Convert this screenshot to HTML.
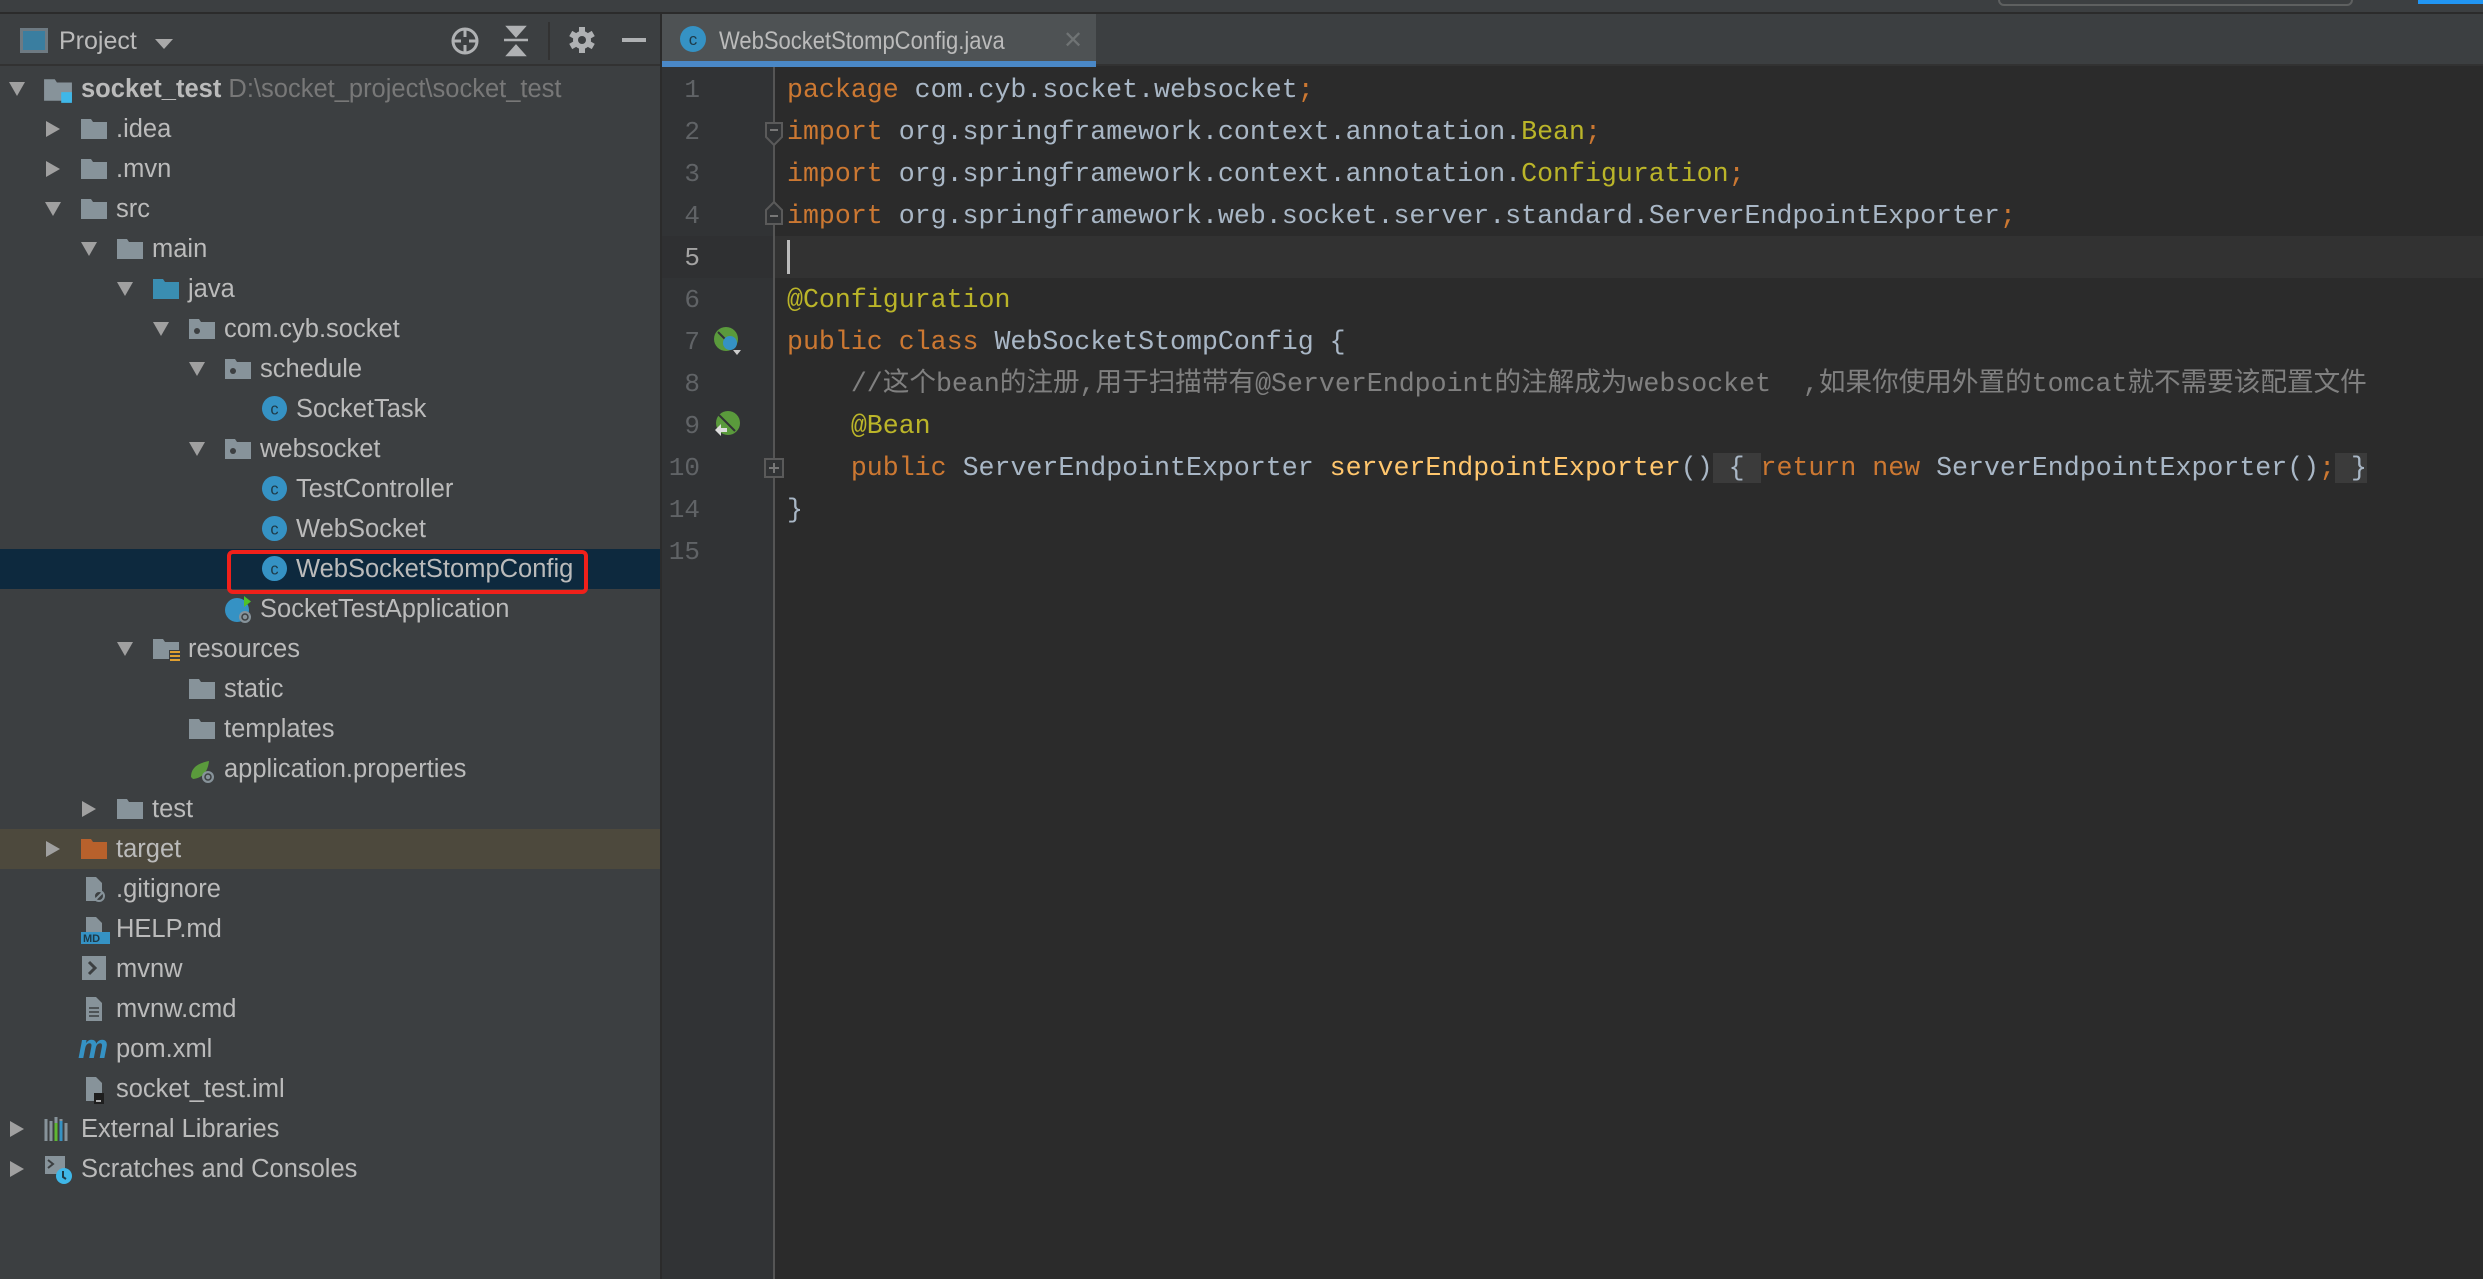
<!DOCTYPE html>
<html><head><meta charset="utf-8">
<style>
*{margin:0;padding:0;box-sizing:border-box}
html,body{width:2483px;height:1279px;overflow:hidden;background:#2b2b2b}
body{position:relative;font-family:"Liberation Sans","Noto Sans CJK SC",sans-serif}
.abs{position:absolute}
#top{left:0;top:0;width:2483px;height:12px;background:#3c3f41}
#topline{left:0;top:12px;width:2483px;height:2px;background:#2b2b2b}
#side{left:0;top:14px;width:660px;height:1265px;background:#3c3f41}
#sidehdr{left:0;top:14px;width:660px;height:52px;background:#3c3f41;border-bottom:2px solid #323232}
#sep{left:660px;top:14px;width:2px;height:1265px;background:#2b2b2b}
#tabbar{left:662px;top:14px;width:1821px;height:52px;background:#3c3f41;border-bottom:2px solid #323232}
#tab{left:662px;top:14px;width:434px;height:52px;background:#4e5254}
#tabline{left:662px;top:61px;width:434px;height:6px;background:#4a88c7}
#gutter{left:662px;top:67px;width:112px;height:1212px;background:#313335}
#gline{left:773px;top:67px;width:2px;height:1212px;background:#555555}
.r{position:absolute;left:0;width:660px;height:40px}
.t{position:absolute;top:0;line-height:40px;font-size:25.5px;color:#bbbbbb;white-space:nowrap}
.ic{position:absolute;top:6px}
.tri{position:absolute;top:12px}
.code{position:absolute;left:787px;font-family:"Liberation Mono","Noto Sans CJK SC",monospace;font-size:26.6px;line-height:42px;height:42px;color:#a9b7c6;white-space:pre}
.ln{position:absolute;right:1783px;font-family:"Liberation Mono",monospace;font-size:26px;line-height:42px;color:#606366;text-align:right}
.k{color:#cc7832}.a{color:#bbb529}.c{color:#808080}.m{color:#ffc66d}
.box{background:#3b3b3b}
</style></head><body>
<div id="top" class="abs"></div>
<div class="abs" style="left:1998px;top:-6px;width:355px;height:12px;border:2px solid #5e6060;border-radius:6px"></div>
<div class="abs" style="left:2418px;top:0;width:65px;height:4px;background:#2196f3"></div>
<div id="topline" class="abs"></div>
<div id="side" class="abs"></div>
<div id="sidehdr" class="abs"></div>
<!-- header -->
<div class="abs" style="left:20px;top:28px;width:28px;height:25px;border:3px solid #6e7a82;background:#3a7ea0"></div>
<div class="abs" style="left:59px;top:22px;font-size:25px;line-height:38px;color:#bbbbbb">Project</div>
<div class="abs" style="left:155px;top:39px;width:0;height:0;border-left:9px solid transparent;border-right:9px solid transparent;border-top:10px solid #a9a9a9"></div>
<svg class="abs" style="left:448px;top:24px" width="34" height="34" viewBox="0 0 34 34"><circle cx="17" cy="17" r="12" fill="none" stroke="#afb1b3" stroke-width="3"/><path d="M17 5v8M17 21v8M5 17h8M21 17h8" stroke="#afb1b3" stroke-width="3"/></svg>
<svg class="abs" style="left:502px;top:25px" width="28" height="32" viewBox="0 0 28 32"><path d="M6 2h16l-8 9zM2 15h24M6 30h16l-8-9z" fill="#afb1b3" stroke="#afb1b3" stroke-width="2.5"/></svg>
<div class="abs" style="left:548px;top:22px;width:2px;height:38px;background:#323232"></div>
<svg class="abs" style="left:568px;top:26px" width="28" height="28" viewBox="0 0 28 28"><g fill="#afb1b3"><circle cx="14" cy="14" r="9"/><rect x="11" y="1" width="6" height="26"/><rect x="11" y="1" width="6" height="26" transform="rotate(60 14 14)"/><rect x="11" y="1" width="6" height="26" transform="rotate(-60 14 14)"/></g><circle cx="14" cy="14" r="4" fill="#3c3f41"/></svg>
<div class="abs" style="left:622px;top:38px;width:24px;height:4px;background:#afb1b3"></div>
<div id="sep" class="abs"></div>
<div id="tabbar" class="abs"></div>
<div id="tab" class="abs"></div>
<div id="tabline" class="abs"></div>
<svg class="abs" style="left:679px;top:25px" width="28" height="28" viewBox="0 0 28 28"><circle cx="14" cy="14" r="13" fill="#3592c4"/><text x="14" y="20" font-size="17" font-family="Liberation Sans" fill="#1e3a48" text-anchor="middle">c</text></svg>
<div class="abs" style="left:719px;top:22px;font-size:22px;line-height:38px;color:#bbbbbb;transform:scaleY(1.12);transform-origin:left center">WebSocketStompConfig.java</div>
<div class="abs" style="left:1063px;top:22px;font-size:24px;line-height:38px;color:#6f7374">✕</div>

<!-- tree rows -->
<div class="r" style="top:549px;background:#0d293e"></div>
<div class="r" style="top:829px;background:#4d493d"></div>
<div class="abs" style="left:227px;top:550px;width:361px;height:44px;border:4px solid #f0201a;border-radius:6px"></div>

<svg width="0" height="0" style="position:absolute">
<defs>
<symbol id="fold" viewBox="0 0 28 28"><path d="M1 4h10l2 3h14v17H1z" fill="#87939a"/></symbol>
<symbol id="pkg" viewBox="0 0 28 28"><path d="M1 4h10l2 3h14v17H1z" fill="#87939a"/><circle cx="9" cy="16" r="3" fill="#3c3f41"/></symbol>
<symbol id="cls" viewBox="0 0 28 28"><circle cx="14" cy="14" r="13" fill="#3592c4"/><text x="14" y="20" font-size="17" font-family="Liberation Sans" fill="#1e3a48" text-anchor="middle">c</text></symbol>
<symbol id="tr" viewBox="0 0 16 16"><path d="M0 1h16L8 15z" fill="#a0a0a0"/></symbol>
<symbol id="tc" viewBox="0 0 16 16"><path d="M1 0v16l14-8z" fill="#a0a0a0"/></symbol>
</defs></svg>

<div class="r" style="top:69px"><svg class="tri" style="left:9px" width="16" height="16"><use href="#tr"/></svg><svg class="ic" style="left:43px" width="30" height="30" viewBox="0 0 28 28"><path d="M1 4h10l2 3h14v17H1z" fill="#87939a"/><rect x="17" y="16" width="10" height="10" fill="#3fb7e8"/></svg><div class="t" style="left:81px;font-weight:bold">socket_test <span style="font-weight:normal;color:#787878">D:\socket_project\socket_test</span></div></div>
<div class="r" style="top:109px"><svg class="tri" style="left:45px" width="16" height="16"><use href="#tc"/></svg><svg class="ic" style="left:80px" width="28" height="28"><use href="#fold"/></svg><div class="t" style="left:116px">.idea</div></div>
<div class="r" style="top:149px"><svg class="tri" style="left:45px" width="16" height="16"><use href="#tc"/></svg><svg class="ic" style="left:80px" width="28" height="28"><use href="#fold"/></svg><div class="t" style="left:116px">.mvn</div></div>
<div class="r" style="top:189px"><svg class="tri" style="left:45px" width="16" height="16"><use href="#tr"/></svg><svg class="ic" style="left:80px" width="28" height="28"><use href="#fold"/></svg><div class="t" style="left:116px">src</div></div>
<div class="r" style="top:229px"><svg class="tri" style="left:81px" width="16" height="16"><use href="#tr"/></svg><svg class="ic" style="left:116px" width="28" height="28"><use href="#fold"/></svg><div class="t" style="left:152px">main</div></div>
<div class="r" style="top:269px"><svg class="tri" style="left:117px" width="16" height="16"><use href="#tr"/></svg><svg class="ic" style="left:152px" width="28" height="28" viewBox="0 0 28 28"><path d="M1 4h10l2 3h14v17H1z" fill="#3a8eb2"/></svg><div class="t" style="left:188px">java</div></div>
<div class="r" style="top:309px"><svg class="tri" style="left:153px" width="16" height="16"><use href="#tr"/></svg><svg class="ic" style="left:188px" width="28" height="28"><use href="#pkg"/></svg><div class="t" style="left:224px">com.cyb.socket</div></div>
<div class="r" style="top:349px"><svg class="tri" style="left:189px" width="16" height="16"><use href="#tr"/></svg><svg class="ic" style="left:224px" width="28" height="28"><use href="#pkg"/></svg><div class="t" style="left:260px">schedule</div></div>
<div class="r" style="top:389px"><svg class="ic" style="left:261px" width="27" height="27"><use href="#cls"/></svg><div class="t" style="left:296px">SocketTask</div></div>
<div class="r" style="top:429px"><svg class="tri" style="left:189px" width="16" height="16"><use href="#tr"/></svg><svg class="ic" style="left:224px" width="28" height="28"><use href="#pkg"/></svg><div class="t" style="left:260px">websocket</div></div>
<div class="r" style="top:469px"><svg class="ic" style="left:261px" width="27" height="27"><use href="#cls"/></svg><div class="t" style="left:296px">TestController</div></div>
<div class="r" style="top:509px"><svg class="ic" style="left:261px" width="27" height="27"><use href="#cls"/></svg><div class="t" style="left:296px">WebSocket</div></div>
<div class="r" style="top:549px"><svg class="ic" style="left:261px" width="27" height="27"><use href="#cls"/></svg><div class="t" style="left:296px">WebSocketStompConfig</div></div>
<div class="r" style="top:589px"><svg class="ic" style="left:224px" width="30" height="30" viewBox="0 0 30 30"><circle cx="13" cy="15" r="12" fill="#3592c4"/><path d="M20 1v11l7-5.5z" fill="#4fc228"/><circle cx="21" cy="22" r="6" fill="#87939a"/><circle cx="21" cy="22" r="3" fill="none" stroke="#3c3f41" stroke-width="1.5"/></svg><div class="t" style="left:260px">SocketTestApplication</div></div>
<div class="r" style="top:629px"><svg class="tri" style="left:117px" width="16" height="16"><use href="#tr"/></svg><svg class="ic" style="left:152px" width="30" height="30" viewBox="0 0 30 30"><path d="M1 4h10l2 3h14v17H1z" fill="#87939a"/><rect x="17" y="15" width="11" height="13" fill="#3c3f41"/><path d="M18 17h10M18 21h10M18 25h10" stroke="#e0a030" stroke-width="2"/></svg><div class="t" style="left:188px">resources</div></div>
<div class="r" style="top:669px"><svg class="ic" style="left:188px" width="28" height="28"><use href="#fold"/></svg><div class="t" style="left:224px">static</div></div>
<div class="r" style="top:709px"><svg class="ic" style="left:188px" width="28" height="28"><use href="#fold"/></svg><div class="t" style="left:224px">templates</div></div>
<div class="r" style="top:749px"><svg class="ic" style="left:188px" width="30" height="30" viewBox="0 0 30 30"><path d="M3 22c0-10 8-14 18-16c-1 10-6 17-16 18z" fill="#5a9a3c"/><circle cx="20" cy="22" r="6" fill="#87939a"/><circle cx="20" cy="22" r="3" fill="none" stroke="#3c3f41" stroke-width="1.5"/></svg><div class="t" style="left:224px">application.properties</div></div>
<div class="r" style="top:789px"><svg class="tri" style="left:81px" width="16" height="16"><use href="#tc"/></svg><svg class="ic" style="left:116px" width="28" height="28"><use href="#fold"/></svg><div class="t" style="left:152px">test</div></div>
<div class="r" style="top:829px"><svg class="tri" style="left:45px" width="16" height="16"><use href="#tc"/></svg><svg class="ic" style="left:80px" width="28" height="28" viewBox="0 0 28 28"><path d="M1 4h10l2 3h14v17H1z" fill="#b8612c"/></svg><div class="t" style="left:116px">target</div></div>
<div class="r" style="top:869px"><svg class="ic" style="left:80px" width="28" height="28" viewBox="0 0 28 28"><path d="M6 2h10l6 6v18H6z" fill="#87939a"/><circle cx="19" cy="21" r="5" fill="#3c3f41" stroke="#87939a" stroke-width="2"/><path d="M16 24l6-6" stroke="#87939a" stroke-width="2"/></svg><div class="t" style="left:116px">.gitignore</div></div>
<div class="r" style="top:909px"><svg class="ic" style="left:80px" width="30" height="30" viewBox="0 0 30 30"><path d="M6 2h10l6 6v10H6z" fill="#87939a"/><rect x="1" y="17" width="29" height="12" fill="#3592c4"/><text x="3" y="27" font-size="11" font-weight="bold" font-family="Liberation Sans" fill="#1e3a48">MD</text></svg><div class="t" style="left:116px">HELP.md</div></div>
<div class="r" style="top:949px"><svg class="ic" style="left:81px" width="26" height="26" viewBox="0 0 26 26"><rect x="1" y="1" width="24" height="24" fill="#87939a"/><path d="M8 7l6 6-6 6" stroke="#3c3f41" stroke-width="3" fill="none"/></svg><div class="t" style="left:116px">mvnw</div></div>
<div class="r" style="top:989px"><svg class="ic" style="left:80px" width="28" height="28" viewBox="0 0 28 28"><path d="M6 2h10l6 6v18H6z" fill="#87939a"/><path d="M9 13h10M9 17h10M9 21h10" stroke="#3c3f41" stroke-width="1.5"/></svg><div class="t" style="left:116px">mvnw.cmd</div></div>
<div class="r" style="top:1029px"><div class="t" style="left:78px;font-size:34px;font-style:italic;font-weight:bold;color:#3592c4;line-height:36px">m</div><div class="t" style="left:116px">pom.xml</div></div>
<div class="r" style="top:1069px"><svg class="ic" style="left:80px" width="28" height="30" viewBox="0 0 28 30"><path d="M6 2h10l6 6v18H6z" fill="#87939a"/><rect x="14" y="18" width="10" height="11" fill="#1e1e1e"/><path d="M16 26h5" stroke="#ddd" stroke-width="1.5"/></svg><div class="t" style="left:116px">socket_test.iml</div></div>
<div class="r" style="top:1109px"><svg class="tri" style="left:9px" width="16" height="16"><use href="#tc"/></svg><svg class="ic" style="left:44px" width="28" height="28" viewBox="0 0 28 28"><path d="M2 4v22M7 6v20M12 2v24M17 4v22M22 8v18" stroke="#87939a" stroke-width="3"/><path d="M12 8v18" stroke="#5fb832" stroke-width="3"/><path d="M17 6v20" stroke="#3592c4" stroke-width="3"/></svg><div class="t" style="left:81px">External Libraries</div></div>
<div class="r" style="top:1149px"><svg class="tri" style="left:9px" width="16" height="16"><use href="#tc"/></svg><svg class="ic" style="left:44px" width="30" height="30" viewBox="0 0 30 30"><rect x="1" y="1" width="20" height="18" fill="#87939a"/><path d="M4 5l5 4-5 4" stroke="#3c3f41" stroke-width="2" fill="none"/><circle cx="20" cy="21" r="8" fill="#3fb7e8"/><path d="M19 16v6l3 2" stroke="#1e3a48" stroke-width="2" fill="none"/></svg><div class="t" style="left:81px">Scratches and Consoles</div></div>

<!-- editor -->
<div id="gutter" class="abs"></div>
<div class="abs" style="left:662px;top:236px;width:112px;height:42px;background:#2f3032"></div>
<div class="abs" style="left:775px;top:236px;width:1708px;height:42px;background:#323232"></div>
<div id="gline" class="abs"></div>
<svg class="abs" style="left:764px;top:122px" width="20" height="24" viewBox="0 0 20 24"><path d="M2 1h16v14l-8 8-8-8z" fill="#313335" stroke="#5a5a5a" stroke-width="2"/><path d="M6 8h8" stroke="#777" stroke-width="2"/></svg>
<svg class="abs" style="left:764px;top:201px" width="20" height="24" viewBox="0 0 20 24"><path d="M2 23h16V9l-8-8-8 8z" fill="#313335" stroke="#5a5a5a" stroke-width="2"/><path d="M6 15h8" stroke="#777" stroke-width="2"/></svg>
<svg class="abs" style="left:764px;top:458px" width="20" height="20" viewBox="0 0 20 20"><rect x="1" y="1" width="18" height="18" fill="#313335" stroke="#5a5a5a" stroke-width="2"/><path d="M5 10h10M10 5v10" stroke="#777" stroke-width="2"/></svg>
<svg class="abs" style="left:713px;top:326px" width="30" height="30" viewBox="0 0 30 30"><circle cx="13" cy="13" r="12" fill="#5a9a3c"/><path d="M5 6l16 16" stroke="#313335" stroke-width="2"/><circle cx="17" cy="17" r="7" fill="#3592c4"/><path d="M20 24h8l-4 5z" fill="#ccc"/></svg>
<svg class="abs" style="left:713px;top:410px" width="30" height="30" viewBox="0 0 30 30"><circle cx="15" cy="13" r="12" fill="#5a9a3c"/><path d="M6 5l16 16" stroke="#313335" stroke-width="2"/><path d="M2 20l6-6v4h6v4H8v4z" fill="#ddd"/></svg>

<div class="ln" style="top:69px">1</div>
<div class="ln" style="top:111px">2</div>
<div class="ln" style="top:153px">3</div>
<div class="ln" style="top:195px">4</div>
<div class="ln" style="top:237px;color:#a4a3a3">5</div>
<div class="ln" style="top:279px">6</div>
<div class="ln" style="top:321px">7</div>
<div class="ln" style="top:363px">8</div>
<div class="ln" style="top:405px">9</div>
<div class="ln" style="top:447px">10</div>
<div class="ln" style="top:489px">14</div>
<div class="ln" style="top:531px">15</div>

<div class="code" style="top:69px"><span class="k">package</span> com.cyb.socket.websocket<span class="k">;</span></div>
<div class="code" style="top:111px"><span class="k">import</span> org.springframework.context.annotation.<span class="a">Bean</span><span class="k">;</span></div>
<div class="code" style="top:153px"><span class="k">import</span> org.springframework.context.annotation.<span class="a">Configuration</span><span class="k">;</span></div>
<div class="code" style="top:195px"><span class="k">import</span> org.springframework.web.socket.server.standard.ServerEndpointExporter<span class="k">;</span></div>
<div class="abs" style="left:787px;top:240px;width:3px;height:34px;background:#bbbbbb"></div>
<div class="code" style="top:279px"><span class="a">@Configuration</span></div>
<div class="code" style="top:321px"><span class="k">public class</span> WebSocketStompConfig {</div>
<div class="code" style="top:363px"><span class="c">    //这个bean的注册,用于扫描带有@ServerEndpoint的注解成为websocket  ,如果你使用外置的tomcat就不需要该配置文件</span></div>
<div class="code" style="top:405px">    <span class="a">@Bean</span></div>
<div class="code" style="top:447px">    <span class="k">public</span> ServerEndpointExporter <span class="m">serverEndpointExporter</span>()<span class="box"> { </span><span class="k">return new</span> ServerEndpointExporter()<span class="k">;</span><span class="box"> }</span></div>
<div class="code" style="top:489px">}</div>
</body></html>
